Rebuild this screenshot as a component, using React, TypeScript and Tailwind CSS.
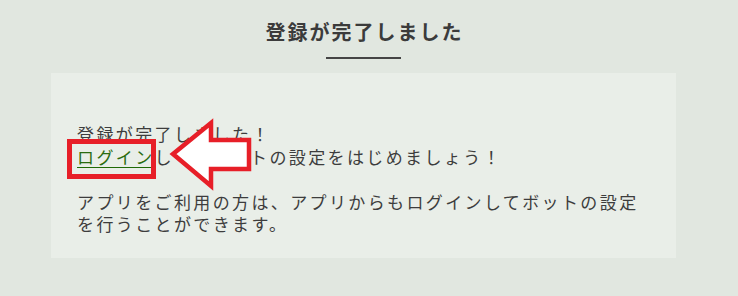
import React from 'react';

const font = { fontFamily: '"Noto Sans CJK JP", "Noto Sans", sans-serif' };

const App: React.FC = () => {
  return (
    <div className="relative w-[738px] h-[296px] bg-[#e1e7e0] overflow-hidden" style={font}>
      <div className="w-[727px] flex flex-col items-center pt-[18px]">
        {/* Heading */}
        <h1 className="text-[20px] leading-[28px] font-bold tracking-[0.1em] text-[#3b3b3b] pl-[2px]">
          登録が完了しました
        </h1>
        <div className="mt-[11px] w-[75px] h-[2px] bg-[#454545]" />

        {/* Card */}
        <div className="mt-[14px] w-[625px] h-[185px] bg-[#e9eee8] pl-[26px] pr-[20px] pt-[50px] text-[17px] leading-[22.5px] tracking-[0.14em] text-[#3d3d3d]">
          <p className="whitespace-nowrap">登録が完了しました！</p>
          <p className="whitespace-nowrap">
            <a href="#" className="text-[#2b6c10] underline decoration-[#1f6a05] underline-offset-[3px]">
              ログイン
            </a>
            して、ボットの設定をはじめましょう！
          </p>
          <p className="h-[22.5px]" />
          <p className="whitespace-nowrap">
            アプリをご利用の方は、アプリからもログインしてボットの設定
            <br />
            を行うことができます。
          </p>
        </div>
      </div>

      {/* Annotation: red box around link */}
      <div className="absolute left-[67px] top-[139px] w-[89px] h-[40px] border-[5px] border-[#e71f28]" />

      {/* Annotation: arrow pointing left */}
      <svg className="absolute left-[165px] top-[116px]" width="88" height="76" viewBox="0 0 88 76">
        <polygon
          points="8,38 46,7 46,24 84,24 84,53 46,53 46,70"
          fill="#ffffff"
          stroke="#e71f28"
          strokeWidth="4.5"
          strokeLinejoin="miter"
        />
      </svg>
    </div>
  );
};

export default App;
